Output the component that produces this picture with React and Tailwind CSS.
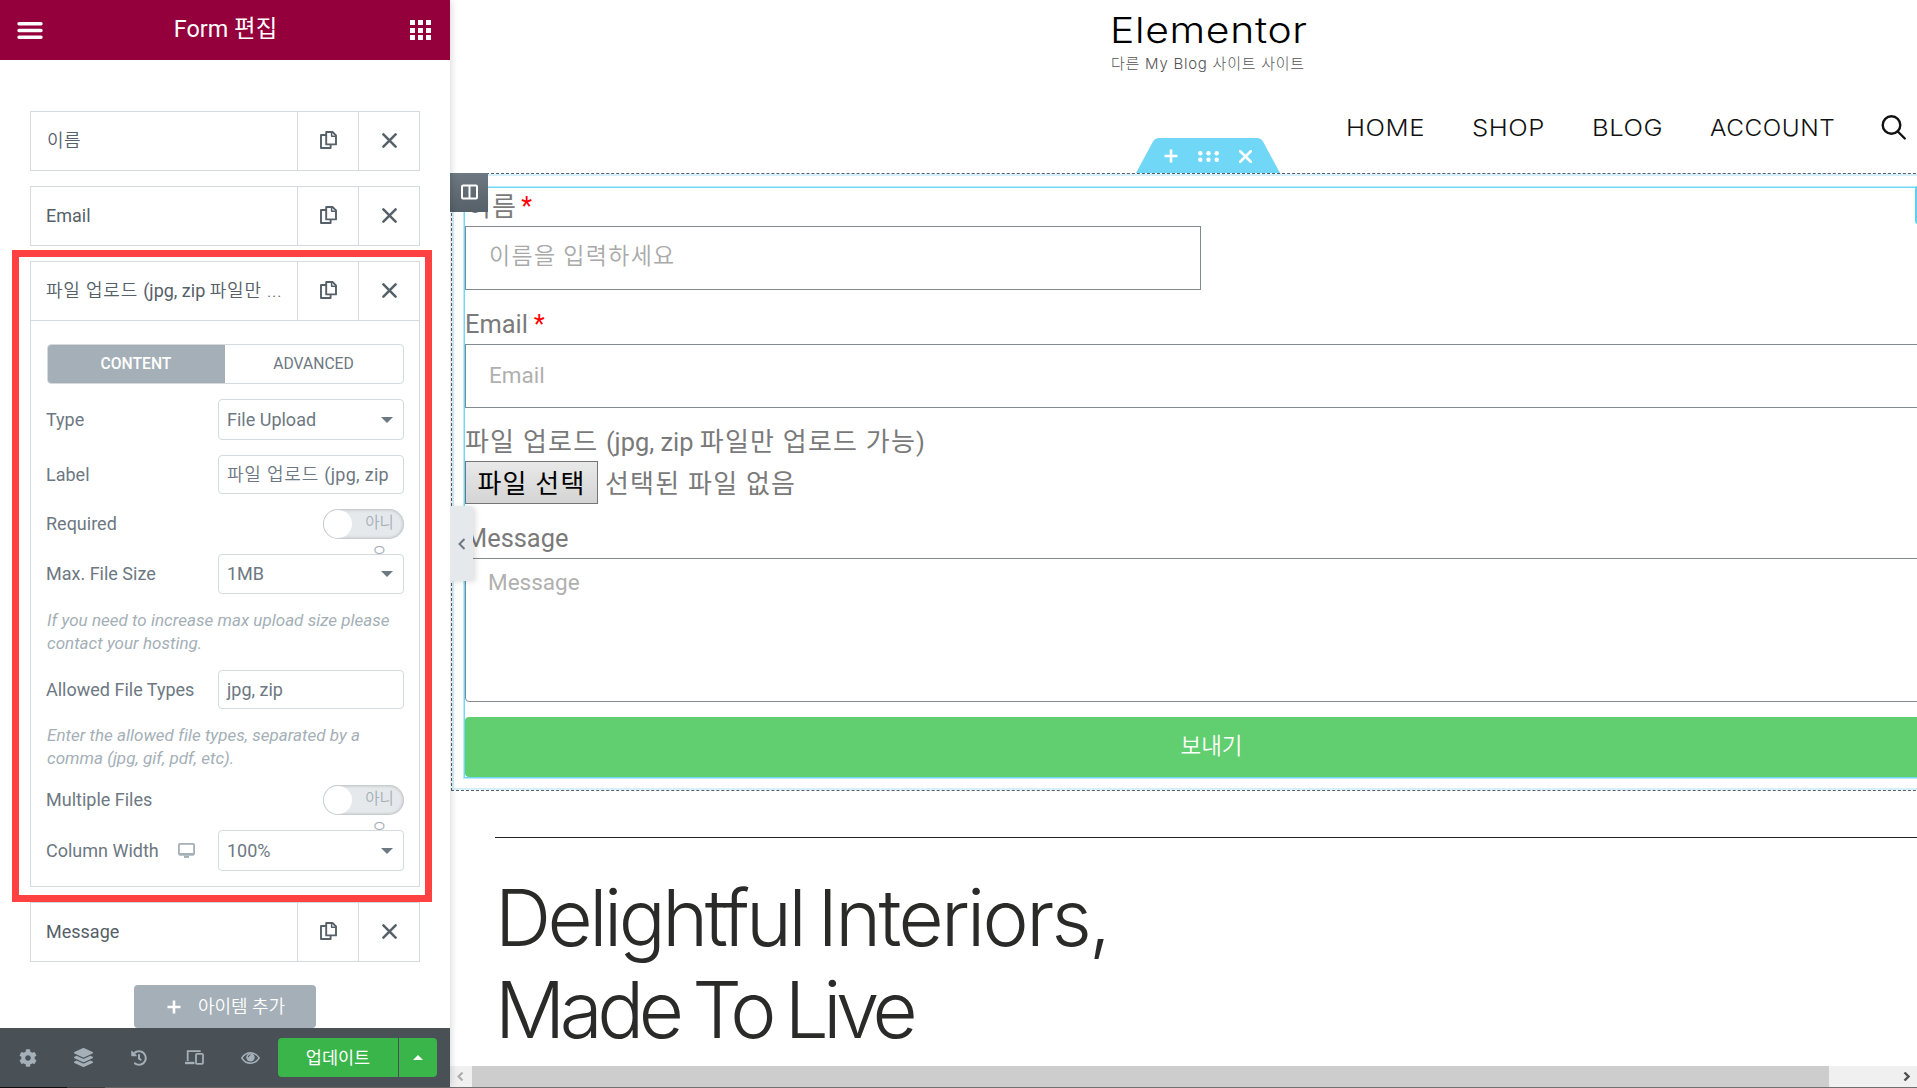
import React from 'react';
import { FaCog, FaLayerGroup, FaHistory } from 'react-icons/fa';
import clsx from 'clsx';

const CopyIcon = () => (
    <svg width="17" height="18" viewBox="0 0 17 18" fill="none" stroke="#556068" strokeWidth="1.9" strokeLinejoin="round">
        <path d="M6.2 1h6.3L16 4.4v9H6.2z" />
        <path d="M11.6 1v4.2H16" strokeWidth="1.5" />
        <path d="M6.2 4H1v13h9.6v-3.4" />
    </svg>
);

const CloseIcon = ({ size = 15, color = '#556068', width = 2.5 }) => (
    <svg width={size} height={size} viewBox="0 0 15 15" fill="none" stroke={color} strokeWidth={width} strokeLinecap="round">
        <path d="M1.4 1.4l12.2 12.2M13.6 1.4L1.4 13.6" />
    </svg>
);

const PlusIcon = () => (
    <svg width="14" height="14" viewBox="0 0 14 14" fill="none" stroke="#fff" strokeWidth="2.6">
        <path d="M7 .5v13M.5 7h13" />
    </svg>
);

const DesktopIcon = () => (
    <svg width="17" height="15" viewBox="0 0 17 15" fill="none" stroke="#a4afb7">
        <rect x=".9" y=".9" width="15.2" height="10.6" rx="1" strokeWidth="1.8" />
        <path d="M1 11.2h15" strokeWidth="2.4" />
        <path d="M6 13.8h5" strokeWidth="2.2" />
    </svg>
);

const DevicesIcon = () => (
    <svg width="19" height="15" viewBox="0 0 19 15" fill="none" stroke="#a4afb7" strokeWidth="1.8">
        <path d="M2.7 11V1.2h13" />
        <path d="M0 13h9.5" strokeWidth="2.4" />
        <rect x="11" y="3.8" width="7" height="10" rx="1" />
    </svg>
);

const EyeIcon = () => (
    <svg width="19" height="12" viewBox="0 0 19 12" fill="none" stroke="#a4afb7">
        <path d="M.8 6C3 2.6 6 .8 9.5.8S16 2.6 18.2 6C16 9.4 13 11.2 9.5 11.2S3 9.4.8 6z" strokeWidth="1.4" />
        <circle cx="9.5" cy="5.4" r="4.2" fill="#a4afb7" stroke="none" />
        <path d="M7.3 5.2a2.2 2.2 0 0 1 2.2-2.2" stroke="#495157" strokeWidth="1" />
    </svg>
);

const ItemHeader = ({ children, open }) => (
    <div className={clsx('flex border-[#d5dadf] text-[18px] text-[#556068]', open ? 'h-[59px] border-b' : 'h-[60px] border')}>
        <div className="flex-1 min-w-0 flex items-center pl-[15px] pb-0.5 whitespace-nowrap">{children}</div>
        <div className="w-[61px] border-l border-[#d5dadf] flex items-center justify-center pb-0.5">
            <CopyIcon />
        </div>
        <div className="w-[61px] border-l border-[#d5dadf] flex items-center justify-center pb-0.5">
            <CloseIcon />
        </div>
    </div>
);

const Row = ({ label, icon, children, className }) => (
    <div className={clsx('flex items-center justify-between', className)}>
        <div className="flex items-center -ml-px pb-px text-[18px] text-[#6d7882]">
            {label}
            {icon}
        </div>
        {children}
    </div>
);

const Select = ({ value }) => (
    <div className="relative z-10 w-[186px] h-full bg-white border border-[#d5dadf] rounded-[4px] flex items-center justify-between pl-2 pr-[10px] text-[18px] text-[#6d7882]">
        <span className="pb-px">{value}</span>
        <svg width="12" height="6" viewBox="0 0 12 6" fill="#6d7882"><path d="M0 0h12L6 6z" /></svg>
    </div>
);

const TextBox = ({ children }) => (
    <div className="w-[186px] h-full bg-white border border-[#d5dadf] rounded-[4px] flex items-center pl-2 text-[18px] text-[#6d7882] whitespace-nowrap overflow-hidden">
        {children}
    </div>
);

const Toggle = () => (
    <div className="w-[81px] h-[30px] rounded-full bg-[#e6e9ec] shadow-[inset_0_0_3px_1px_#b9bec2] flex justify-between pr-[9px]">
        <div className="w-7 h-7 m-px rounded-full bg-white"></div>
        <div className="-mt-px w-[31px] h-[30px] text-[15.5px] leading-[31px] text-center break-all text-[#a4afb7] font-[350]">아니오</div>
    </div>
);

const Help = ({ children }) => (
    <p className="mt-[15px] h-[46px] text-[17px] leading-[22.5px] italic tracking-[0.02px] text-[#a4afb7] whitespace-nowrap">{children}</p>
);

const Panel = () => (
    <aside className="relative z-20 w-[450px] shrink-0 h-[1087px] flex flex-col bg-white shadow-[0_0_8px_rgba(0,0,0,0.2)]">
        <header className="h-[60px] shrink-0 bg-[#93003c] flex items-center justify-between px-[17px] pr-[19px] text-white">
            <svg width="26" height="17" viewBox="0 0 26 17" stroke="#fff" strokeWidth="3.4" strokeLinecap="round">
                <path d="M2 1.8h22M2 8.5h22M2 15.2h22" />
            </svg>
            <h1 className="text-[23.4px] leading-none pr-0.5">Form 편집</h1>
            <div className="grid grid-cols-3 gap-[2.5px] w-[21px]">
                {[...Array(9)].map((_, i) => (
                    <span key={i} className="h-[5px] bg-white"></span>
                ))}
            </div>
        </header>

        <div className="relative flex-1 min-h-0 overflow-hidden px-[30px] pt-[51px]">
            <div className="flex flex-col gap-[15px]">
                <ItemHeader><span className="font-[350] tracking-[0.5px] pl-px">이름</span></ItemHeader>
                <ItemHeader>Email</ItemHeader>
                <div className="h-[626px] border border-[#d5dadf]">
                    <ItemHeader open>
                        <span className="font-[350] tracking-[0.8px]">파일 업로드&nbsp;</span>(jpg, zip&nbsp;
                        <span className="font-[350] tracking-[0.8px]">파일만 ...</span>
                    </ItemHeader>
                    <div className="pt-[23px] pl-4 pr-[15px]">
                        <div className="flex h-10 rounded-[4px] border border-[#d5dadf] overflow-hidden text-[15.7px]">
                            <div className="w-[178px] -m-px h-10 bg-[#a4afb7] text-white font-medium flex items-center justify-center">CONTENT</div>
                            <div className="flex-1 text-[#6d7882] flex items-center justify-center">ADVANCED</div>
                        </div>
                        <Row label="Type" className="mt-[15px] h-[41px]"><Select value="File Upload" /></Row>
                        <Row label="Label" className="mt-[15px] h-[39px]">
                            <TextBox>
                                <span className="font-[350] tracking-[0.8px]">파일 업로드&nbsp;</span>
                                <span className="tracking-[0.3px]">(jpg, zip</span>
                            </TextBox>
                        </Row>
                        <Row label="Required" className="mt-[15px] h-[30px]"><Toggle /></Row>
                        <Row label="Max. File Size" className="mt-[15px] h-[40px]"><Select value="1MB" /></Row>
                        <Help>If you need to increase max upload size please<br />contact your hosting.</Help>
                        <Row label="Allowed File Types" className="mt-[15px] h-[39px]"><TextBox>jpg, zip</TextBox></Row>
                        <Help>Enter the allowed file types, separated by a<br />comma (jpg, gif, pdf, etc).</Help>
                        <Row label="Multiple Files" className="mt-[15px] h-[30px]"><Toggle /></Row>
                        <Row
                            label="Column Width"
                            icon={<span className="ml-[19px]"><DesktopIcon /></span>}
                            className="mt-[15px] h-[41px]"
                        >
                            <Select value="100%" />
                        </Row>
                    </div>
                </div>
                <ItemHeader>Message</ItemHeader>
            </div>
            <button className="mt-[23px] mx-auto w-[182px] h-[43px] rounded-[4px] bg-[#a4afb7] text-white text-[18px] font-[350] flex items-center justify-center gap-[17px] pl-0.5">
                <PlusIcon />
                <span>아이템 추가</span>
            </button>

            {/* Highlight frame around the open field */}
            <div className="absolute left-[12px] top-[190px] w-[420px] h-[652px] border-[7px] border-[#ff4141] z-20"></div>
        </div>

        <footer className="h-[59px] shrink-0 bg-[#495157] text-[#a4afb7] flex items-center">
            <div className="w-[278px] flex items-center">
                <div className="w-[56px] flex justify-center"><FaCog size={18} /></div>
                <div className="w-[55px] flex justify-center"><FaLayerGroup size={19} /></div>
                <div className="w-[56px] flex justify-center"><FaHistory size={16} /></div>
                <div className="w-[55px] flex justify-center"><DevicesIcon /></div>
                <div className="w-[56px] flex justify-center"><EyeIcon /></div>
            </div>
            <button className="w-[120px] h-[39px] rounded-l-[4px] bg-[#39b54a] text-white text-[17.5px] pt-px">업데이트</button>
            <button className="ml-px w-[38px] h-[39px] rounded-r-[4px] bg-[#39b54a] flex items-center justify-center">
                <svg width="10" height="5" viewBox="0 0 10 5" fill="#fff"><path d="M0 5h10L5 0z" /></svg>
            </button>
        </footer>

        {/* Collapse handle */}
        <div className="absolute left-[450px] top-[506px] w-[23px] h-[75px] bg-[#e6e9ec] rounded-r-[3px] shadow-[3px_1px_5px_rgba(0,0,0,0.12)] flex items-center justify-center">
            <svg width="8" height="12" viewBox="0 0 8 12" fill="none" stroke="#6d7882" strokeWidth="2"><path d="M6.5 1L1.5 6l5 5" /></svg>
        </div>
    </aside>
);

const SiteHeader = () => (
    <div className="h-[173px]">
        <div className="w-[200px] ml-[661px] pt-[9px] whitespace-nowrap">
            <div className="-ml-px origin-left scale-x-[1.15] font-['Inter','Noto_Sans_CJK_KR',sans-serif] font-light text-[35.5px] leading-[44px] tracking-[0.6px] text-black">Elementor</div>
            <div className="font-['Inter','Noto_Sans_CJK_KR',sans-serif] font-light text-[15px] leading-[21px] tracking-[0.75px] text-[#555]">다른 My Blog 사이트 사이트</div>
        </div>
        <nav className="mt-[38px] h-8 flex items-center font-['Inter',sans-serif] font-light text-[23px] tracking-[0.5px] text-[#111] whitespace-nowrap">
            <span className="ml-[896px] w-[126px] origin-left scale-x-[1.115]">HOME</span>
            <span className="w-[120px] origin-left scale-x-[1.115]">SHOP</span>
            <span className="w-[118px] origin-left scale-x-[1.115]">BLOG</span>
            <span className="w-[171px] origin-left scale-x-[1.06]">ACCOUNT</span>
            <svg width="26" height="26" viewBox="0 0 26 26" fill="none" stroke="#111" strokeWidth="2.4" strokeLinecap="round">
                <circle cx="10.5" cy="10" r="8.8" />
                <path d="M16.8 16.5l7 7" />
            </svg>
        </nav>
    </div>
);

const Form = () => (
    <form className="ml-[13px] mt-[14px] w-[1493px] h-[589px] shadow-[0_0_0_1px_#71d7f7,0_0_0_2px_#b8ebfb] text-[25.4px] text-[#7a7a7a] whitespace-nowrap">
        <div className="h-[38px] flex items-center text-[26px] tracking-[1.2px]"><span className="pl-0.5">이름</span><span className="ml-1 text-[25px] text-[#f00]">*</span></div>
        <div className="w-[736px] h-16 border border-[#818a91] flex items-center pl-[23px] pb-0.5 text-[23px] tracking-[1.3px] font-[350] text-[#a9a9a9]">이름을 입력하세요</div>
        <div className="mt-[15px] h-[39px] flex items-center">Email<span className="ml-[6px] text-[#f00]">*</span></div>
        <div className="h-16 border border-[#818a91] flex items-center pl-[23px] pb-px text-[22.5px] text-[#b0b0b0]">Email</div>
        <div className="mt-[15px] h-[38px] flex items-center">
            <span className="text-[26px] tracking-[1.2px]">파일 업로드&nbsp;</span>(jpg, zip&nbsp;
            <span className="text-[26px] tracking-[1.2px]">파일만 업로드 가능</span>)
        </div>
        <div className="h-[43px] flex items-center text-[26px] tracking-[1.2px]">
            <span className="w-[133px] h-[43px] border border-[#767676] bg-linear-to-b from-[#e9e9e9] to-[#d4d4d4] text-black flex items-center justify-center pt-1">파일 선택</span>
            <span className="ml-[7px] pt-1">선택된 파일 없음</span>
        </div>
        <div className="mt-[15px] h-[39px] flex items-center">Message</div>
        <div className="h-36 border border-[#818a91] rounded-[4px] pl-[22px] pt-[9px] text-[22.5px] leading-[28px] text-[#b0b0b0]">Message</div>
        <div className="mt-[15px] h-[60px] rounded-[4px] bg-[#61ce70] text-white text-[22.5px] font-[350] flex items-center justify-center">보내기</div>
    </form>
);

const Preview = () => (
    <main className="flex-1 min-w-0 h-[1087px] flex flex-col overflow-hidden">
        <div className="flex-1 min-h-0 overflow-hidden">
            <SiteHeader />

            <section className="relative ml-px w-[1520px] h-[618px] border border-dashed border-[#556068] shadow-[inset_0_0_0_2px_#d5f0fa] flex flex-col">
                <Form />
                {/* Section handle */}
                <div className="absolute left-[684px] -top-[36px] w-[144px] h-[35px]">
                    <svg className="absolute inset-0" width="144" height="35" viewBox="0 0 144 35" fill="#71d7f7">
                        <path d="M0 35L17 3.5Q19 0 23 0H121Q125 0 127 3.5L144 35z" />
                    </svg>
                    <div className="relative h-9 flex items-center pl-[28px]">
                        <PlusIcon />
                        <svg className="ml-5" width="21" height="11" viewBox="0 0 21 11" fill="#fff">
                            {[2.3, 10.5, 18.7].map((x) => (
                                <g key={x}>
                                    <circle cx={x} cy="2.3" r="2.2" />
                                    <circle cx={x} cy="8.7" r="2.2" />
                                </g>
                            ))}
                        </svg>
                        <span className="ml-5"><CloseIcon size={13} color="#fff" width={3} /></span>
                    </div>
                </div>
                {/* Column handle */}
                <div className="absolute -left-[2px] -top-px w-[38px] h-[39px] bg-linear-to-b from-[#6d7882] to-[#556068] flex items-center justify-center pb-px">
                    <svg width="17" height="16" viewBox="0 0 17 16" fill="none" stroke="#fff" strokeWidth="2">
                        <rect x="1" y="1.5" width="15" height="13" rx="1" />
                        <path d="M8.5 1v14" />
                    </svg>
                </div>
                <div className="absolute left-[1463px] top-[12px] w-2 h-[38px] rounded-l-[3px] bg-[#5bd0f2]"></div>
            </section>

            <div className="ml-[45px] mt-[46px] border-t border-[#222]"></div>
            <h2 className="ml-[45px] mt-[34px] font-['Inter',sans-serif] font-light text-[78px] leading-[92px] text-[#2a2a28] whitespace-nowrap">
                <span className="block tracking-[-3.5px] [word-spacing:-4px]">Delightful <span className="tracking-[-2.7px]">Interiors,</span></span>
                <span className="block tracking-[-5.4px] [word-spacing:-3px]">Made To Live</span>
            </h2>
        </div>

        <div className="h-[21px] shrink-0 bg-[#f0f0f0] flex items-center justify-between pl-[7px] pr-[7px]">
            <svg width="7" height="9" viewBox="0 0 7 9" fill="none" stroke="#aaa" strokeWidth="2"><path d="M5.5 .5l-4 4 4 4" /></svg>
            <div className="w-[1357px] h-full ml-2 mr-auto bg-[#cdcdcd]"></div>
            <svg width="7" height="9" viewBox="0 0 7 9" fill="none" stroke="#505050" strokeWidth="2.4"><path d="M1.5 .5l4 4-4 4" /></svg>
        </div>
    </main>
);

const App = () => {
    return (
        <div className="w-[1917px] h-[1088px] overflow-hidden bg-white font-['Roboto','Noto_Sans_CJK_KR',sans-serif]">
            <div className="flex h-[1087px]">
                <Panel />
                <Preview />
            </div>
            <div className="flex h-px">
                <div className="w-[67px] bg-[#111]"></div>
                <div className="w-[38px] bg-[#444]"></div>
                <div className="flex-1 bg-[#707070]"></div>
            </div>
        </div>
    );
};

export default App;
